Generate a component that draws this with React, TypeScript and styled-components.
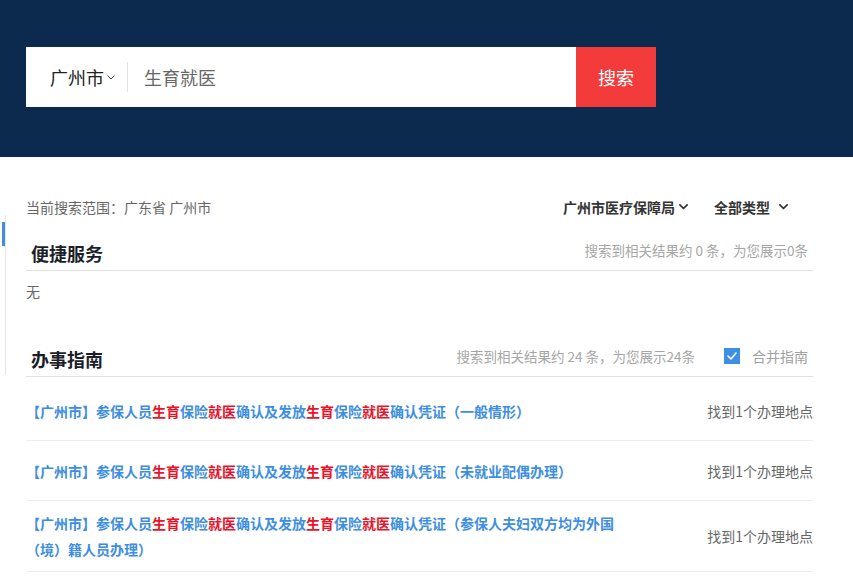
import React from "react";
import styled, { createGlobalStyle } from "styled-components";

const Global = createGlobalStyle`
  html, body { margin: 0; padding: 0; background: #fff; }
  body {
    font-family: "Microsoft YaHei", "Noto Sans CJK SC", "Noto Sans", sans-serif;
    text-spacing-trim: space-all;
  }
  * { box-sizing: border-box; }
`;

const Page = styled.div`
  position: relative;
  width: 853px;
  min-height: 579px;
`;

const Header = styled.header`
  height: 157px;
  background: #0b2a4e;
  padding: 47px 26px 0;
`;

const SearchBar = styled.div`
  display: flex;
  width: 630px;
  height: 60px;
`;

const SearchField = styled.div`
  flex: 1;
  display: flex;
  align-items: center;
  background: #fff;
  padding-left: 24px;
`;

const CitySelect = styled.div`
  display: flex;
  align-items: center;
  gap: 3px;
  font-size: 18px;
  color: #222;
  padding-right: 12px;
  height: 30px;
  border-right: 1px solid #e2e2e2;
`;

const Query = styled.div`
  font-size: 18px;
  color: #666;
  padding-left: 16px;
`;

const SearchButton = styled.button`
  width: 80px;
  border: 0;
  background: #f43b3b;
  color: #fff;
  font-family: inherit;
  font-size: 18px;
  padding: 0;
`;

const Main = styled.main`
  padding: 40px 40px 0 26px;
`;

const Rail = styled.div`
  position: absolute;
  left: 5px;
  top: 215px;
  width: 1px;
  height: 160px;
  background: #e6e6e6;
`;

const RailMark = styled.div`
  position: absolute;
  left: -3px;
  top: 7px;
  width: 3px;
  height: 24px;
  background: #3f8ee2;
`;

const ScopeBar = styled.div`
  display: flex;
  align-items: center;
  justify-content: space-between;
  height: 20px;
  padding-right: 25px;
`;

const Scope = styled.span`
  font-size: 14px;
  color: #666;
`;

const Filters = styled.div`
  display: flex;
  gap: 26px;
`;

const Filter = styled.span<{ $gap: number }>`
  display: flex;
  align-items: center;
  gap: ${(p) => p.$gap}px;
  font-size: 14px;
  font-weight: bold;
  color: #333;
`;

const Section = styled.section<{ $top: number }>`
  margin-top: ${(p) => p.$top}px;
`;

const SectionHead = styled.div`
  display: flex;
  justify-content: space-between;
  height: 42px;
  padding: 0 5px;
  border-bottom: 1px solid #e0e0e0;
`;

const Title = styled.h2`
  align-self: flex-end;
  margin: 0 0 5px;
  font-size: 18px;
  line-height: 24px;
  font-weight: bold;
  color: #1c1f2a;
`;

const Meta = styled.div`
  align-self: center;
  display: flex;
  align-items: center;
  gap: 29px;
  font-size: 13.5px;
  color: #a6a6a6;
`;

const Merge = styled.label`
  display: flex;
  align-items: center;
  gap: 12px;
  font-size: 14px;
  color: #a0a0a0;
`;

const Check = styled.span`
  width: 16px;
  height: 16px;
  background: #3c8ee8;
  display: flex;
  align-items: center;
  justify-content: center;
`;

const Empty = styled.div`
  padding-top: 10px;
  font-size: 14px;
  line-height: 20px;
  color: #666;
`;

const List = styled.ul`
  list-style: none;
  margin: 4px 0 0;
  padding: 0;
`;

const Row = styled.li`
  display: flex;
  align-items: center;
  justify-content: space-between;
  min-height: 60px;
  padding: 9px 0;
  border-bottom: 1px solid #eeeeee;
`;

const Link = styled.a`
  width: 596px;
  font-size: 14px;
  line-height: 26px;
  font-weight: bold;
  color: #3d8ee0;
  text-decoration: none;
`;

const Hit = styled.span`
  color: #e8142c;
`;

const Place = styled.span`
  font-size: 14px;
  color: #666;
`;

const Chevron = ({ size = 8, color = "#333", w = 1.6 }: { size?: number; color?: string; w?: number }) => (
  <svg width={size} height={size * 0.6} viewBox="0 0 10 6" fill="none">
    <path d="M1 1l4 4 4-4" stroke={color} strokeWidth={w * 1.2} strokeLinecap="round" strokeLinejoin="round" />
  </svg>
);

const titleParts = (tail: string) => (
  <>
    【广州市】参保人员<Hit>生育</Hit>保险<Hit>就医</Hit>确认及发放<Hit>生育</Hit>保险<Hit>就医</Hit>确认凭证{tail}
  </>
);

const rows = ["（一般情形）", "（未就业配偶办理）", "（参保人夫妇双方均为外国（境）籍人员办理）"];

export default function App() {
  return (
    <Page>
      <Global />
      <Header>
        <SearchBar>
          <SearchField>
            <CitySelect>
              广州市
              <Chevron size={8} color="#333" w={1} />
            </CitySelect>
            <Query>生育就医</Query>
          </SearchField>
          <SearchButton>搜索</SearchButton>
        </SearchBar>
      </Header>
      <Rail>
        <RailMark />
      </Rail>
      <Main>
        <ScopeBar>
          <Scope>当前搜索范围：广东省 广州市</Scope>
          <Filters>
            <Filter $gap={4}>
              广州市医疗保障局
              <Chevron size={9} color="#333" w={1.6} />
            </Filter>
            <Filter $gap={9}>
              全部类型
              <Chevron size={9} color="#333" w={1.6} />
            </Filter>
          </Filters>
        </ScopeBar>
        <Section $top={12}>
          <SectionHead>
            <Title>便捷服务</Title>
            <Meta>搜索到相关结果约 0 条，为您展示0条</Meta>
          </SectionHead>
          <Empty>无</Empty>
        </Section>
        <Section $top={34}>
          <SectionHead>
            <Title>办事指南</Title>
            <Meta>
              搜索到相关结果约 24 条，为您展示24条
              <Merge>
                <Check>
                  <svg width="10" height="8" viewBox="0 0 10 8" fill="none">
                    <path d="M1 4l3 3 5-6" stroke="#fff" strokeWidth="1.6" strokeLinecap="round" strokeLinejoin="round" />
                  </svg>
                </Check>
                合并指南
              </Merge>
            </Meta>
          </SectionHead>
          <List>
            {rows.map((t) => (
              <Row key={t}>
                <Link href="#">{titleParts(t)}</Link>
                <Place>找到1个办理地点</Place>
              </Row>
            ))}
          </List>
        </Section>
      </Main>
    </Page>
  );
}
